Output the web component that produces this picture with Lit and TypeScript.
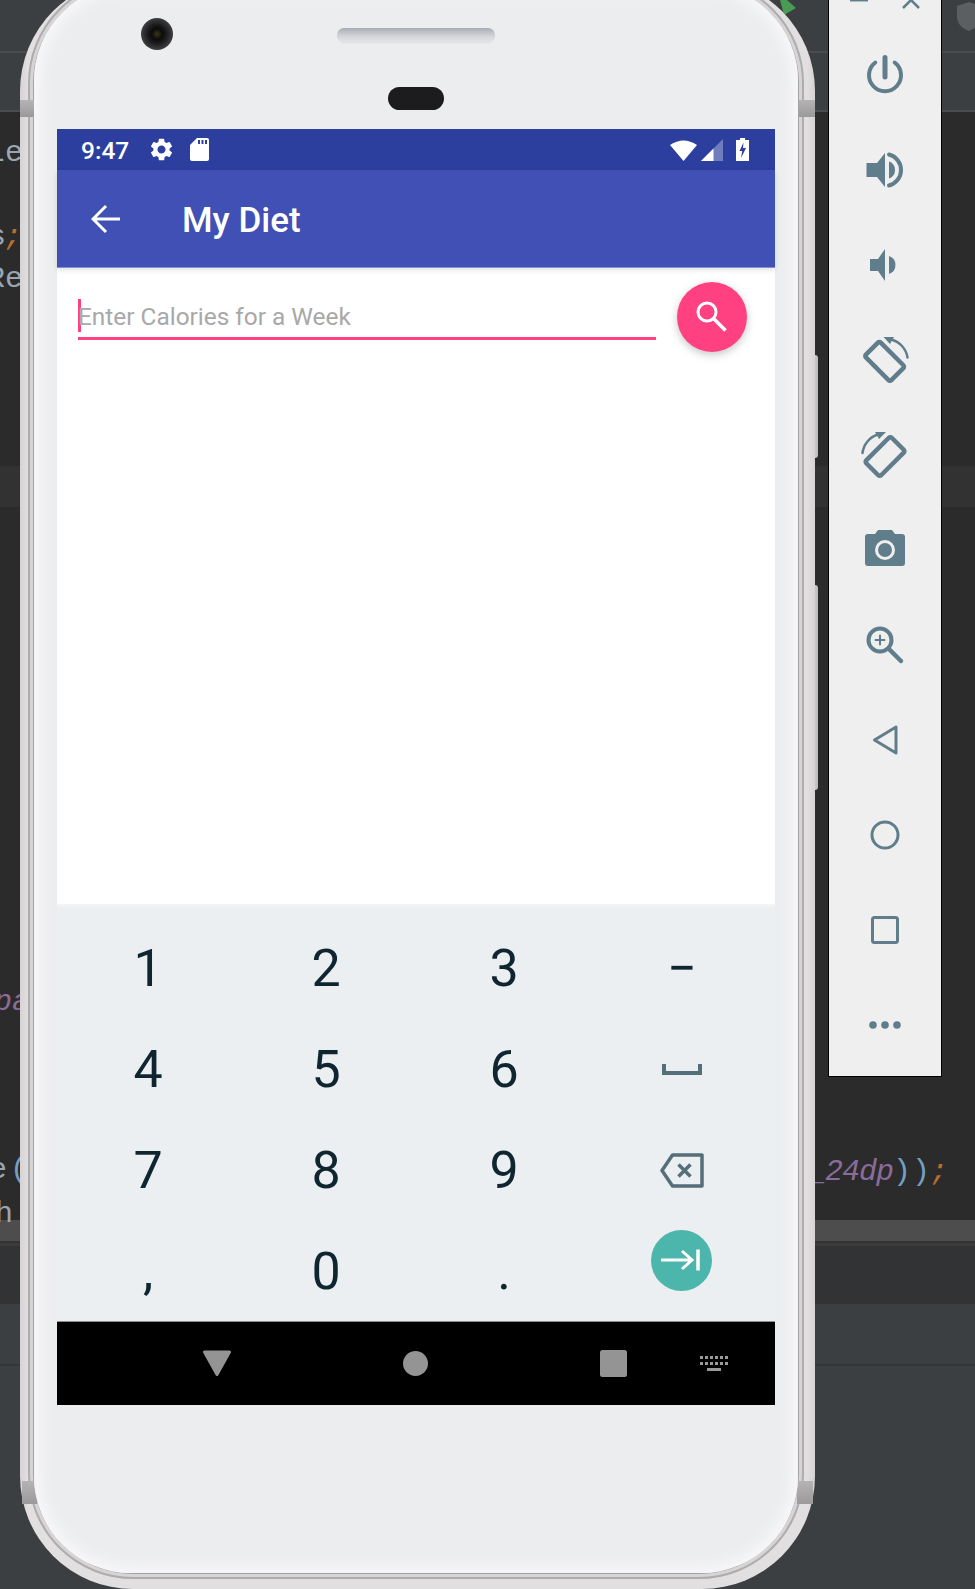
import { LitElement, html, css, svg } from "lit";
import { customElement } from "lit/decorators.js";

const GEAR = "M19.14 12.94c.04-.3.06-.61.06-.94 0-.32-.02-.64-.07-.94l2.03-1.58c.18-.14.23-.41.12-.61l-1.92-3.32c-.12-.22-.37-.29-.59-.22l-2.39.96c-.5-.38-1.03-.7-1.62-.94l-.36-2.54c-.04-.24-.24-.41-.48-.41h-3.84c-.24 0-.43.17-.47.41l-.36 2.54c-.59.24-1.13.57-1.62.94l-2.39-.96c-.22-.08-.47 0-.59.22L2.74 8.87c-.12.21-.08.47.12.61l2.03 1.58c-.05.3-.09.63-.09.94s.02.64.07.94l-2.03 1.58c-.18.14-.23.41-.12.61l1.92 3.32c.12.22.37.29.59.22l2.39-.96c.5.38 1.03.7 1.62.94l.36 2.54c.05.24.24.41.48.41h3.84c.24 0 .44-.17.47-.41l.36-2.54c.59-.24 1.13-.56 1.62-.94l2.39.96c.22.08.47 0 .59-.22l1.92-3.32c.12-.22.07-.47-.12-.61l-2.01-1.58zM12 15.6c-1.98 0-3.6-1.62-3.6-3.6s1.62-3.6 3.6-3.6 3.6 1.62 3.6 3.6-1.62 3.6-3.6 3.6z";

const CODE: { t: string; x: number; b: number; cls: string }[] = [
  { t: "Le", x: -13, b: 161, cls: "plain" },
  { t: "s", x: -12, b: 245, cls: "plain" },
  { t: ";", x: 4, b: 245, cls: "orange" },
  { t: "Re", x: -13, b: 287, cls: "plain" },
  { t: "pa", x: -6, b: 1010, cls: "purple" },
  { t: "e", x: -11, b: 1178, cls: "plain" },
  { t: "(", x: 10, b: 1178, cls: "blue" },
  { t: "h", x: -5, b: 1222, cls: "plain" },
  { t: "_24dp", x: 808, b: 1180, cls: "purple tight" },
  { t: ")", x: 893, b: 1180, cls: "blue" },
  { t: ")", x: 912, b: 1180, cls: "blue" },
  { t: ";", x: 930, b: 1180, cls: "orange" },
];

const TOOL_ICONS = [
  svg`<path class="ln" stroke-width="4" d="M12.3 9.5A16 16 0 1 0 31.7 9.5"/><path class="ln" stroke-width="5" stroke-linecap="butt" d="M22 4.500V24"/>`,
  svg`<path class="fl" d="M3.500 15H14L22 5V39L14 29H3.500Z"/><path class="fl" d="M26 13.500a9 9 0 0 1 0 17Z"/><path class="ln" stroke-width="4" stroke-linecap="butt" d="M26 6.500A16 16 0 0 1 26 37.500"/>`,
  svg`<path class="fl" d="M7 16H15L22 6V38L15 28H7Z"/><path class="fl" d="M26 13a9.500 9.500 0 0 1 0 18Z"/>`,
  svg`<rect class="ln" stroke-width="4.500" x="4" y="13" width="36" height="21" rx="2" transform="rotate(45 22 23)"/><path class="ln" stroke-width="2.500" stroke-linecap="butt" d="M28 1.500A22 22 0 0 1 44.500 19.500"/><path class="fl" d="M20.500 -1L31 -1L27 6Z"/>`,
  svg`<rect class="ln" stroke-width="4.500" x="4" y="13" width="36" height="21" rx="2" transform="rotate(-45 22 23.500)"/><path class="ln" stroke-width="2.500" stroke-linecap="butt" d="M-0.500 20A22 22 0 0 1 15 1.500"/><path class="fl" d="M23 -1L12 -1L16 6Z"/>`,
  svg`<path class="fl" fill-rule="evenodd" d="M5 6H12L15 2H29L32 6H39a3 3 0 0 1 3 3V35a3 3 0 0 1-3 3H5a3 3 0 0 1-3-3V9a3 3 0 0 1 3-3Z"/><circle cx="22" cy="22" r="8.500" fill="none" stroke="#efefef" stroke-width="3"/>`,
  svg`<circle class="ln" stroke-width="4" cx="17" cy="17" r="11.500"/><path class="ln" stroke-width="2" stroke-linecap="butt" d="M12.500 17H21.500M17 12.500V21.500"/><path class="ln" stroke-width="4.500" stroke-linecap="butt" d="M25.500 25.500L38 38"/>`,
  svg`<path class="ln" stroke-width="3" stroke-linejoin="round" d="M11.500 22L33 9V35Z"/>`,
  svg`<circle class="ln" stroke-width="3" cx="22" cy="22" r="13"/>`,
  svg`<rect class="ln" stroke-width="3" x="9.500" y="9.500" width="25" height="25" rx="2"/>`,
  svg`<circle class="fl" cx="10" cy="22" r="3.800"/><circle class="fl" cx="22" cy="22" r="3.800"/><circle class="fl" cx="34" cy="22" r="3.800"/>`,
];

const KEYS = ["1", "2", "3", "−", "4", "5", "6", "sp", "7", "8", "9", "bs", ",", "0", ".", "go"];

@customElement("app-root")
export class AppRoot extends LitElement {
  static styles = css`
    :host {
      display: block;
      width: 975px;
      height: 1589px;
      position: relative;
      overflow: hidden;
      background: #3c3f41;
    }
    * { box-sizing: border-box; }
    .bands { display: flex; flex-direction: column; height: 100%; }
    .bands div { flex: none; }
    .b1 { height: 51px; background: #3c3f41; }
    .bl { height: 2px; background: #4a4c4e; }
    .b2 { height: 57px; background: #3c3f41; }
    .b3 { height: 354px; background: #2b2b2b; }
    .b4 { height: 41px; background: #323232; }
    .b5 { height: 713px; background: #2b2b2b; }
    .b6 { height: 21px; background: #4d4d4d; }
    .b7 { height: 2px; background: #333; }
    .b8 { height: 3px; background: #3b3b3b; }
    .b9 { height: 58px; background: #313335; }
    .b10 { height: 60px; background: #3c3f41; }
    .b11 { height: 2px; background: #333537; }

    .code {
      position: absolute;
      font: 30px/34px "Liberation Mono", monospace;
      white-space: pre;
      opacity: 0.88;
    }
    .plain { color: #a9b7c6; }
    .orange { color: #cc7832; font-style: italic; }
    .purple { color: #9876aa; font-style: italic; }
    .tight { letter-spacing: -1px; }
    .blue { color: #7fb0dc; }

    .shield { position: absolute; left: 957px; top: 2px; }
    .play { position: absolute; left: 778px; top: 0; }

    .button {
      position: absolute;
      background: linear-gradient(90deg, #d8d6d7, #bdbbbc);
      border-radius: 0 3px 3px 0;
      left: 810px;
      width: 8px;
    }
    .b-a { top: 355px; height: 103px; }
    .b-b { top: 585px; height: 205px; }

    .phone {
      position: absolute;
      left: 20px;
      top: -22px;
      width: 795px;
      height: 1611px;
      padding: 0 11px 10px 8px;
      border-radius: 113px;
      background: linear-gradient(90deg, #d7d3d5, #e2dfe0 1%, #e2dfe0 99%, #d7d3d5);
    }
    .rim {
      height: 100%;
      padding: 3px;
      border: 2px solid #aeacad;
      border-radius: 105px;
      background: #d6d4d5;
    }
    .seat {
      height: 100%;
      border: 1px solid #a3a1a2;
      border-radius: 100px;
    }
    .body {
      position: relative;
      height: 100%;
      padding: 145px 0 0 23px;
      border-radius: 97px;
      background: #ecedef;
      box-shadow: inset 0 0 14px 6px #f8f8fa;
    }
    .antenna { position: absolute; background: linear-gradient(#b5b3b4, #9b999a); }
    .a-tl { left: 0; top: 122px; width: 14px; height: 17px; }
    .a-tr { left: 779px; top: 122px; width: 16px; height: 17px; }
    .a-bl { left: 2px; top: 1503px; width: 15px; height: 23px; }
    .a-br { left: 777px; top: 1503px; width: 16px; height: 23px; }
    .camera {
      position: absolute;
      left: 107px;
      top: 34px;
      width: 32px;
      height: 32px;
      border-radius: 50%;
      background: radial-gradient(circle at 50% 50%, #3a3618 0, #0b0b0b 24%, #1c1c1e 42%, #3f3f41 70%, #555557 100%);
    }
    .speaker {
      position: absolute;
      left: 303px;
      top: 44px;
      width: 158px;
      height: 14px;
      border-radius: 7px;
      background: linear-gradient(#a9acb5, #d3d5da 60%, #e3e3e6);
      box-shadow: 0 1px 1px #dfdfe2;
    }
    .pill {
      position: absolute;
      left: 354px;
      top: 103px;
      width: 56px;
      height: 23px;
      border-radius: 12px;
      background: #1c1c1e;
    }

    .screen {
      width: 718px;
      height: 1276px;
      display: flex;
      flex-direction: column;
      background: #fff;
      font-family: Roboto, sans-serif;
    }
    .status {
      height: 41px;
      flex: none;
      display: flex;
      align-items: center;
      padding-left: 24px;
      background: #2c3e9e;
      color: #fff;
    }
    .time { font-size: 24.500px; font-weight: 500; width: 67px; line-height: 43px; height: 41px; }
    .status svg { flex: none; display: block; }
    .sd { margin-left: 15px; }
    .wifi { margin-left: 461px; }
    .signal { margin-left: 4px; }
    .batt { margin-left: 13px; }

    .appbar {
      position: relative;
      height: 98px;
      flex: none;
      display: flex;
      align-items: center;
      padding-left: 34px;
      background: #4050b4;
      border-bottom: 1px solid #8490d4;
      box-shadow: 0 2px 5px rgba(0, 0, 0, 0.12);
      color: #fff;
    }
    .appbar svg { flex: none; width: 30px; height: 30px; }
    .title {
      margin-left: 61px;
      font-size: 35px;
      font-weight: 500;
      line-height: 102px;
      height: 97px;
    }
    .content {
      height: 636px;
      flex: none;
      display: flex;
      align-items: flex-start;
      padding: 14px 28px 0 21px;
      gap: 21px;
    }
    .field {
      flex: 1;
      margin-top: 17px;
      height: 41px;
      display: flex;
      padding-bottom: 4px;
      border-bottom: 3px solid #ff4081;
    }
    .caret { flex: none; width: 3px; height: 33px; background: #ff4081; }
    .ph {
      margin-left: -3px;
      font-size: 24.400px;
      line-height: 35px;
      color: #a8a8a8;
      white-space: nowrap;
    }
    .fab {
      flex: none;
      width: 70px;
      height: 70px;
      border-radius: 50%;
      background: #ff4081;
      display: flex;
      align-items: center;
      justify-content: center;
      box-shadow: 0 3px 8px rgba(0, 0, 0, 0.22);
    }
    .keyboard {
      height: 417px;
      flex: none;
      overflow: hidden;
      background: #eceff1;
      padding: 14px 4px 0 2px;
      display: grid;
      grid-template-columns: repeat(4, 178px);
      grid-auto-rows: 101px;
      box-shadow: inset 0 4px 4px -3px #f7f8f9;
    }
    .key {
      display: flex;
      align-items: center;
      justify-content: center;
      font-size: 52px;
      line-height: 101px;
      color: #0f2631;
    }
    .go {
      width: 61px;
      height: 61px;
      border-radius: 50%;
      background: #4db6ac;
      margin: 0 2px 23px 0;
      display: flex;
      align-items: center;
      justify-content: center;
    }
    .nav {
      height: 84px;
      flex: none;
      display: flex;
      align-items: center;
      padding-left: 145px;
      background: #000;
      border-top: 1px solid #8a8c8d;
    }
    .nav svg { flex: none; display: block; }
    .n-home { margin-left: 171px; }
    .n-rec { margin-left: 172px; }
    .n-kbd { margin-left: 73px; }

    .toolbar {
      position: absolute;
      left: 828px;
      top: 0;
      width: 114px;
      height: 1077px;
      display: flex;
      flex-direction: column;
      align-items: center;
      background: #efefef;
      border: solid #000;
      border-width: 0 1px 1px 1px;
    }
    .win { flex: none; height: 27.500px; width: 100%; display: block; }
    .tool {
      flex: none;
      height: 95px;
      display: flex;
      align-items: center;
      justify-content: center;
    }
    .tool svg { overflow: visible; display: block; }
    .ln { fill: none; stroke: #607d8b; stroke-linecap: round; }
    .fl { fill: #607d8b; }
  `;

  private keyContent(k: string) {
    if (k === "sp") {
      return html`<svg width="40" height="11" viewBox="0 0 40 11"><path d="M2 0V9H38V0" fill="none" stroke="#546e7a" stroke-width="4"/></svg>`;
    }
    if (k === "bs") {
      return html`<svg width="45" height="35" viewBox="0 0 45 35"><path d="M12.500 2H42V33H12.500L2 17.500Z" fill="none" stroke="#546e7a" stroke-width="3.500" stroke-linejoin="round"/><path d="M18.500 11.500L30.500 23.500M30.500 11.500L18.500 23.500" fill="none" stroke="#546e7a" stroke-width="3.500"/></svg>`;
    }
    if (k === "go") {
      return html`<div class="go"><svg width="40" height="24" viewBox="0 0 40 24"><path d="M0 12H31M21 3L31 12L21 21" fill="none" stroke="#fff" stroke-width="3"/><path d="M37 1.500V22.500" fill="none" stroke="#fff" stroke-width="3.500"/></svg></div>`;
    }
    return k;
  }

  render() {
    return html`
      <div class="bands">
        <div class="b1"></div><div class="bl"></div><div class="b2"></div><div class="bl"></div>
        <div class="b3"></div><div class="b4"></div><div class="b5"></div><div class="b6"></div>
        <div class="b7"></div><div class="b8"></div><div class="b9"></div><div class="b10"></div>
        <div class="b11"></div>
      </div>
      ${CODE.map(
        (c) => html`<span class="code ${c.cls}" style="left:${c.x}px;top:${c.b - 25}px">${c.t}</span>`
      )}
      <svg class="shield" width="24" height="30" viewBox="0 0 24 30"><path d="M0 4L12 0L24 4V15C24 22 18 27 12 29C6 27 0 22 0 15Z" fill="#5c5f61"/></svg>
      <svg class="play" width="18" height="15" viewBox="0 0 18 15"><path d="M0 -8L18 8L6 15Z" fill="#499c54"/></svg>
      <div class="button b-a"></div>
      <div class="button b-b"></div>

      <div class="phone">
        <div class="antenna a-tl"></div>
        <div class="antenna a-tr"></div>
        <div class="antenna a-bl"></div>
        <div class="antenna a-br"></div>
        <div class="rim">
          <div class="seat">
            <div class="body">
              <div class="camera"></div>
              <div class="speaker"></div>
              <div class="pill"></div>
              <div class="screen">
                <div class="status">
                  <span class="time">9:47</span>
                  <svg width="27" height="27" viewBox="0 0 24 24"><path d="${GEAR}" fill="#fff"/></svg>
                  <svg class="sd" width="19" height="23" viewBox="0 0 19 23"><path d="M7 0H17a2 2 0 0 1 2 2V21a2 2 0 0 1-2 2H2a2 2 0 0 1-2-2V7Z" fill="#fff"/><path d="M8 2h2v4H8zM11.500 2h2v4h-2zM15 2h2v4h-2z" fill="#2c3e9e"/></svg>
                  <svg class="wifi" width="27" height="22" viewBox="0 0 27 22"><path d="M0 6Q13.500 -3 27 6L13.500 22Z" fill="#fff"/></svg>
                  <svg class="signal" width="22" height="22" viewBox="0 0 22 22"><path d="M0 22L22 0V22Z" fill="#fff" fill-opacity="0.32"/><path d="M0 22L12.500 9.500V22Z" fill="#fff"/></svg>
                  <svg class="batt" width="13" height="23" viewBox="0 0 13 23"><path fill-rule="evenodd" d="M4 0H9V2H13V23H0V2H4Z M7.500 4.500L3.500 13H6.200L5 20L10 10H7L7.500 4.500Z" fill="#fff"/></svg>
                </div>
                <div class="appbar">
                  <svg viewBox="0 0 30 30"><path d="M29 15H3M15 2L2 15L15 28" fill="none" stroke="#fff" stroke-width="3"/></svg>
                  <span class="title">My Diet</span>
                </div>
                <div class="content">
                  <div class="field"><div class="caret"></div><span class="ph">Enter Calories for a Week</span></div>
                  <div class="fab">
                    <svg width="36" height="36" viewBox="0 0 36 36"><circle cx="13" cy="13" r="9" fill="none" stroke="#fff" stroke-width="3"/><path d="M19.500 19.500L31.500 31.500" fill="none" stroke="#fff" stroke-width="3.500"/></svg>
                  </div>
                </div>
                <div class="keyboard">
                  ${KEYS.map((k) => html`<div class="key">${this.keyContent(k)}</div>`)}
                </div>
                <div class="nav">
                  <svg width="30" height="27" viewBox="0 0 30 27"><path d="M2.500 2H27.500L15 24.500Z" fill="#949494" stroke="#949494" stroke-width="3" stroke-linejoin="round"/></svg>
                  <svg class="n-home" width="25" height="25" viewBox="0 0 25 25"><circle cx="12.500" cy="12.500" r="12.500" fill="#949494"/></svg>
                  <svg class="n-rec" width="27" height="27" viewBox="0 0 27 27"><rect width="27" height="27" rx="2.500" fill="#949494"/></svg>
                  <svg class="n-kbd" width="28" height="16" viewBox="0 0 28 16"><path d="M0 0h3v3H0zM5 0h3v3H5zM10 0h3v3h-3zM15 0h3v3h-3zM20 0h3v3h-3zM25 0h3v3h-3zM0 6h3v3H0zM5 6h3v3H5zM10 6h3v3h-3zM15 6h3v3h-3zM20 6h3v3h-3zM25 6h3v3h-3zM7 12h14v3H7z" fill="#9a9a9a"/></svg>
                </div>
              </div>
            </div>
          </div>
        </div>
      </div>

      <div class="toolbar">
        <svg class="win" viewBox="0 0 112 27.500"><path d="M21 .700H39" stroke="#607d8b" stroke-width="1.500"/><path d="M74 8L82 0L90 8" fill="none" stroke="#607d8b" stroke-width="2.500"/></svg>
        ${TOOL_ICONS.map(
          (i) => html`<div class="tool"><svg width="44" height="44" viewBox="0 0 44 44">${i}</svg></div>`
        )}
      </div>
    `;
  }
}
